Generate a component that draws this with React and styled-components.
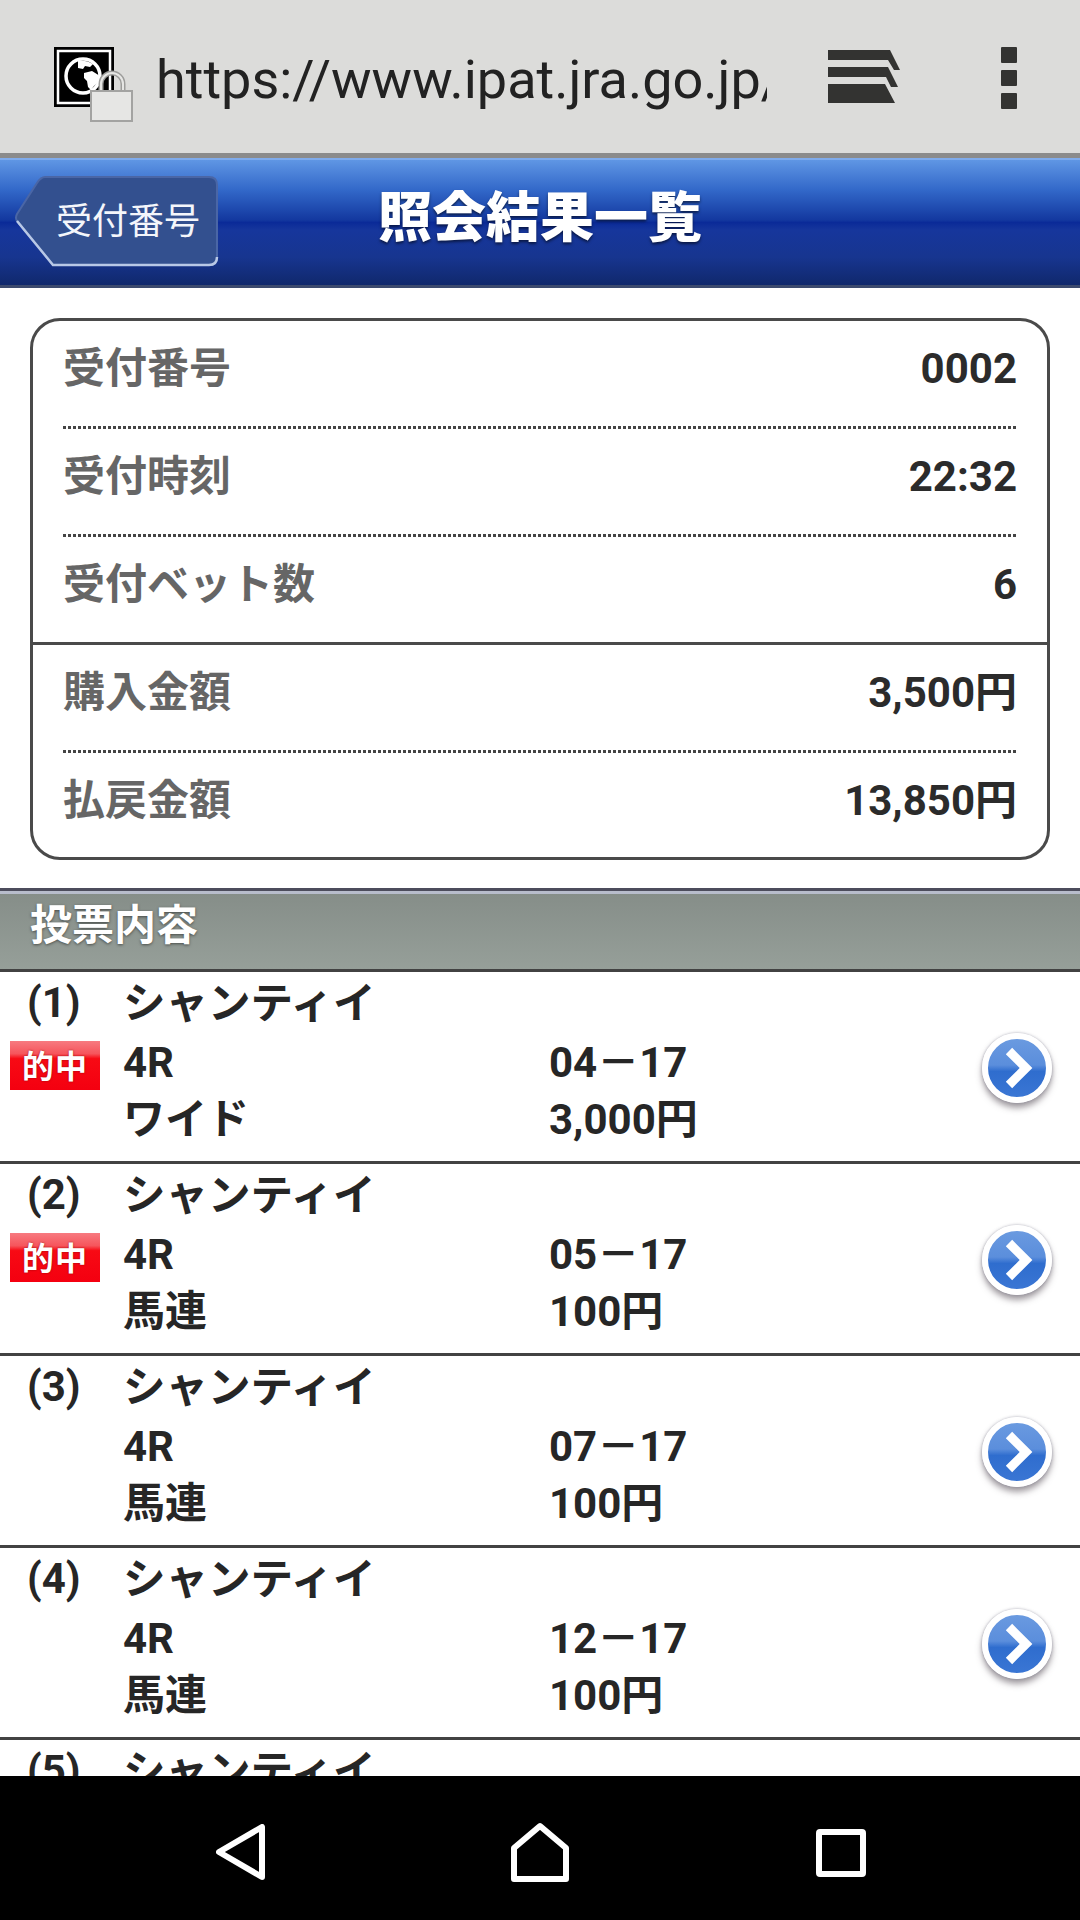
import React from 'react';
import styled, { createGlobalStyle } from 'styled-components';

const GlobalStyle = createGlobalStyle`
  html, body { margin: 0; padding: 0; background: #fff; }
  body { font-family: Roboto, "Noto Sans CJK JP", "Noto Sans", sans-serif; }
`

const Page = styled.div`
  width: 1080px; height: 1920px; display: flex; flex-direction: column; overflow: hidden;
`

const BrowserBar = styled.div`
  height: 153px; flex: none; display: flex; align-items: center; background: #dcdcda;
  border-bottom: 5px solid #8b8b8b; padding-left: 54px; box-sizing: content-box;
`

const SiteIcon = styled.svg`
  width: 80px; height: 78px; flex: none; margin-top: 19px;
`

const Url = styled.div`
  width: 611px; margin-left: 22px; overflow: hidden; white-space: nowrap;
  font-family: Roboto, "Liberation Sans", sans-serif; font-size: 54px; color: #222;
  margin-top: 6px;
`

const TabsIcon = styled.svg`
  width: 72px; height: 54px; margin-left: 61px; flex: none;
`

const MenuDots = styled.div`
  display: flex; flex-direction: column; gap: 7px; margin-left: 101px; margin-top: 2px;
  span { display: block; width: 16px; height: 16px; background: #333331; border-radius: 1px; }
`

const PageHeader = styled.header`
  height: 130px; box-sizing: border-box; flex: none; display: grid; grid-template-columns: 1fr auto 1fr; align-items: center;
  border-top: 2px solid #7fabec; border-bottom: 3px solid #3c4a6e;
  background: linear-gradient(180deg, #5f96e4 0%, #3268c9 24%, #13389f 48%, #0a2a98 50%, #16369c 56%, #17358f 78%, #10286c 100%);
`

const BackButton = styled.div`
  position: relative; width: 204px; height: 92px; margin-left: 15px; display: flex; align-items: center;
  justify-content: center; padding-left: 22px; box-sizing: border-box; margin-top: -4px;
  color: #f4f6fb; font-size: 36px; line-height: 1; font-weight: 400; font-family: "Noto Sans CJK JP", sans-serif;
  span { position: relative; top: -3px; }
`

const BackShape = styled.svg`
  position: absolute; left: 0; top: 0; width: 100%; height: 100%;
`

const PageTitle = styled.h1`
  margin: 0 0 18px; font-size: 54px; line-height: 1; font-weight: 900; color: #fff;
  font-family: "Noto Sans CJK JP", sans-serif;
  text-shadow: 0 2px 3px rgba(0, 0, 0, .55);
`

const Summary = styled.section`
  margin: 30px 30px 28px; border: 3px solid #4a4a4a; border-radius: 30px; flex: none;
`

const rowPadding = { dotted: 13, solid: 10 }

const SummaryRow = styled.div`
  height: ${p => p.$line ? '108px' : '104px'}; box-sizing: border-box; display: flex; justify-content: space-between; align-items: center;
  padding: 0 30px ${p => rowPadding[p.$line] ?? 8}px; background-repeat: no-repeat;
  background-position: 30px bottom; background-size: calc(100% - 61px) 3px;
  background-image: ${p => p.$line === 'dotted'
    ? 'repeating-linear-gradient(90deg, #444 0 3px, transparent 3px 5px)'
    : 'none'};
  border-bottom: ${p => p.$line === 'solid' ? '3px solid #4a4a4a' : 'none'};
`

const Label = styled.span`
  font-size: 42px; line-height: 1; font-weight: 700; color: #666;
`

const Value = styled.span`
  font-size: 42px; line-height: 1; font-weight: 700; color: #2b2b2b;
`

const SectionHead = styled.h2`
  margin: 0; height: 78px; box-sizing: content-box; flex: none; display: flex; align-items: center; padding: 0 0 0 30px;
  border-top: 3px solid #4c4c5c; border-bottom: 3px solid #424242;
  box-shadow: inset 0 3px 0 #b7bccb;
  background: linear-gradient(180deg, #858d88, #969f99);
  font-size: 42px; line-height: 1; font-weight: 700; color: #fff; text-shadow: 0 1px 3px rgba(0, 0, 0, .5);
  span { position: relative; top: -4px; }
`

const BetList = styled.div`
  flex: 1; min-height: 0; overflow: hidden;
`

const BetRow = styled.div`
  height: 192px; box-sizing: border-box; border-bottom: 3px solid #424242; padding-top: 5px;
  display: grid; grid-template-columns: 123px 426px 1fr 101px; grid-template-rows: 57px 57px 57px;
  align-items: center; color: #262626; font-size: 42px; line-height: 1; font-weight: 700;
`

const BetNo = styled.div`
  grid-column: 1; grid-row: 1; padding-left: 27px; margin-top: -6px;
`

const HitBadge = styled.div`
  grid-column: 1; grid-row: 2; width: 90px; height: 49px; margin: 5px 0 0 10px; padding-bottom: 3px; box-sizing: border-box;
  display: flex; align-items: center; justify-content: center; color: #fff; font-size: 32px; font-weight: 700;
  font-family: "Noto Sans CJK JP", sans-serif;
  background: linear-gradient(180deg, #f77a80 0%, #f6555c 26%, #f80a14 36%, #f40010 100%);
  text-shadow: 0 0 2px rgba(120, 0, 0, .8); letter-spacing: 1px;
`

const Cell = styled.div`
  grid-column: ${p => p.$col}; grid-row: ${p => p.$row};
`

const VenueCell = styled(Cell)`
  font-size: 42.5px; margin-top: -2px;
`

const ArrowCell = styled.div`
  grid-column: 4; grid-row: 1 / 4; display: flex; justify-content: flex-start; padding-left: 3px;
  margin-top: 10px;
`

const ArrowButton = styled.div`
  width: 70px; height: 70px; box-sizing: border-box; border-radius: 50%; border: 6px solid #fff;
  display: flex; align-items: center; justify-content: center;
  background: linear-gradient(180deg, #6a9ae0 0%, #5b8edc 45%, #2f6dce 56%, #3a76d4 100%);
  box-shadow: 0 0 3px rgba(120, 120, 140, .6), 0 5px 6px rgba(70, 60, 70, .5);
  svg { width: 30px; height: 42px; margin-left: 4px; }
`

const NavBar = styled.nav`
  height: 144px; flex: none; background: #000; display: flex; align-items: center;
  svg { display: block; flex: none; }
`

const NavBack = styled.svg`
  width: 50px; height: 56px; margin-left: 216px; margin-top: 8px;
`

const NavHome = styled.svg`
  width: 58px; height: 60px; margin-left: 245px; margin-top: 7px;
`

const NavRecent = styled.svg`
  width: 50px; height: 48px; margin-left: 247px; margin-top: 10px;
`

const summaryRows = [
  { label: '受付番号', value: '0002', line: 'dotted' },
  { label: '受付時刻', value: '22:32', line: 'dotted' },
  { label: '受付ベット数', value: '6', line: 'solid' },
  { label: '購入金額', value: '3,500円', line: 'dotted' },
  { label: '払戻金額', value: '13,850円' },
]

const bets = [
  { no: 1, hit: true, type: 'ワイド', nums: '04－17', amount: '3,000円' },
  { no: 2, hit: true, type: '馬連', nums: '05－17', amount: '100円' },
  { no: 3, type: '馬連', nums: '07－17', amount: '100円' },
  { no: 4, type: '馬連', nums: '12－17', amount: '100円' },
  { no: 5, type: '馬連', nums: '14－17', amount: '100円' },
]

const App = () => {
  return (
    <Page>
      <GlobalStyle />
      <BrowserBar>
        <SiteIcon viewBox="0 0 80 78">
          <rect x="0" y="0" width="60" height="60" fill="#000" />
          <rect x="4" y="4" width="52" height="52" fill="none" stroke="#fff" strokeWidth="2.5" />
          <circle cx="29" cy="29" r="17" fill="none" stroke="#fff" strokeWidth="3.5" />
          <path d="M24 14c5-1 11 0 15 3l-3 3-5-1-2 3-5-1zM30 26l8-2 8 5-1 6-5 4-3 4-3-3-1-6-3-3z" fill="#fff" />
          <path d="M47 46v-9a11 11 0 0 1 22 0v9" fill="none" stroke="#9c9c9a" strokeWidth="5" />
          <path d="M47 46v-9a11 11 0 0 1 22 0v9" fill="none" stroke="#e6e6e4" strokeWidth="2" />
          <rect x="37" y="44" width="41" height="30" fill="#e6e6e4" stroke="#a3a3a1" strokeWidth="2" />
        </SiteIcon>
        <Url>https://www.ipat.jra.go.jp/</Url>
        <TabsIcon viewBox="0 0 72 54">
          <path d="M0 0h62l10 20h-6L60 10H0zM0 17h60l10 20-7 0-5-10H0zM0 34h57l10 19H0z" fill="#333331" />
        </TabsIcon>
        <MenuDots><span /><span /><span /></MenuDots>
      </BrowserBar>

      <PageHeader>
        <BackButton>
          <BackShape viewBox="0 0 204 92" preserveAspectRatio="none">
            <path d="M30 2H194q8 0 8 8V82q0 8-8 8H38L2 46Q0 43 2 39L22 8Q26 2 30 2Z" fill="#33508f" stroke="#4a66a6" strokeWidth="2" />
            <path d="M2 46L38 90H194q8 0 8-8" fill="none" stroke="#b8c8e6" strokeWidth="2.5" />
          </BackShape>
          <span>受付番号</span>
        </BackButton>
        <PageTitle>照会結果一覧</PageTitle>
      </PageHeader>

      <Summary>
        {summaryRows.map(row => (
          <SummaryRow key={row.label} $line={row.line}>
            <Label>{row.label}</Label>
            <Value>{row.value}</Value>
          </SummaryRow>
        ))}
      </Summary>

      <SectionHead><span>投票内容</span></SectionHead>

      <BetList>
        {bets.map(bet => (
          <BetRow key={bet.no}>
            <BetNo>({bet.no})</BetNo>
            {bet.hit && <HitBadge>的中</HitBadge>}
            <VenueCell $col={2} $row={1}>シャンティイ</VenueCell>
            <Cell $col={2} $row={2}>4R</Cell>
            <Cell $col={3} $row={2}>{bet.nums}</Cell>
            <Cell $col={2} $row={3}>{bet.type}</Cell>
            <Cell $col={3} $row={3}>{bet.amount}</Cell>
            <ArrowCell>
              <ArrowButton>
                <svg viewBox="0 0 30 42">
                  <path d="M5 4L22 21L5 38" fill="none" stroke="#fff" strokeWidth="9" />
                </svg>
              </ArrowButton>
            </ArrowCell>
          </BetRow>
        ))}
      </BetList>

      <NavBar>
        <NavBack viewBox="0 0 50 56">
          <path d="M46 3V53L3 28Z" fill="none" stroke="#fff" strokeWidth="6" strokeLinejoin="round" />
        </NavBack>
        <NavHome viewBox="0 0 58 60">
          <path d="M3 57V26L29 4L55 26V57Z" fill="none" stroke="#fff" strokeWidth="6" strokeLinejoin="round" />
        </NavHome>
        <NavRecent viewBox="0 0 50 48">
          <rect x="3" y="3" width="44" height="42" fill="none" stroke="#fff" strokeWidth="6" rx="1" />
        </NavRecent>
      </NavBar>
    </Page>
  )
}

export default App;
